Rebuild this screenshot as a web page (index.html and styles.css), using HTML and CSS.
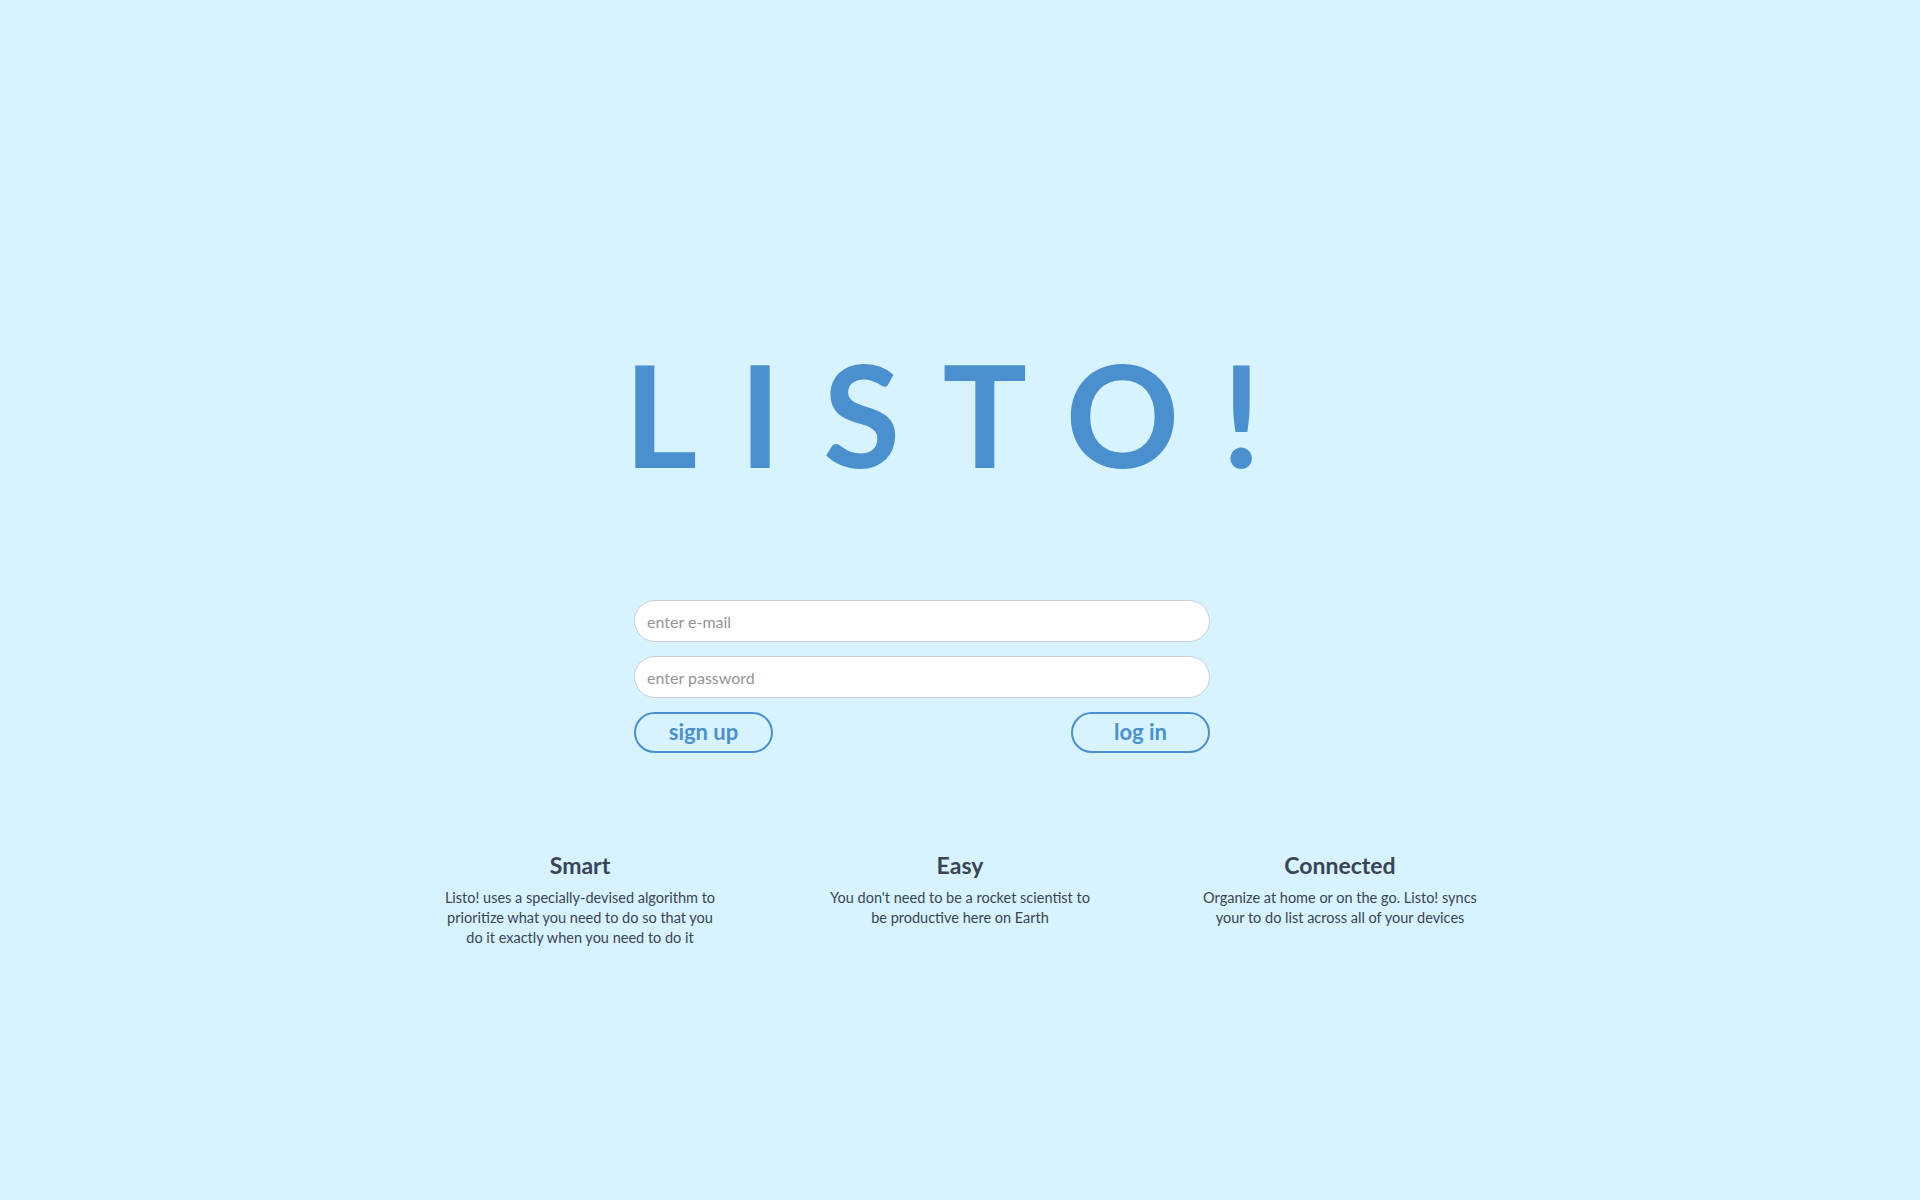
FILE: index.html
```html
<!DOCTYPE html>
<html lang="en">
<head>
<meta charset="utf-8">
<title>Listo!</title>
<link rel="stylesheet" href="styles.css">
</head>
<body>
<main class="page">
  <section class="hero">
    <h1 class="logo">LISTO!</h1>
    <form class="login">
      <input class="field" type="email" placeholder="enter e-mail">
      <input class="field" type="password" placeholder="enter password">
      <div class="actions">
        <button class="btn" type="button">sign up</button>
        <button class="btn" type="button">log in</button>
      </div>
    </form>
  </section>
  <section class="features">
    <div class="feature">
      <h2 class="feature-title">Smart</h2>
      <p class="feature-text">Listo! uses a specially-devised algorithm to<br>prioritize what you need to do so that you<br>do it exactly when you need to do it</p>
    </div>
    <div class="feature">
      <h2 class="feature-title">Easy</h2>
      <p class="feature-text">You don't need to be a rocket scientist to<br>be productive here on Earth</p>
    </div>
    <div class="feature">
      <h2 class="feature-title">Connected</h2>
      <p class="feature-text">Organize at home or on the go. Listo! syncs<br>your to do list across all of your devices</p>
    </div>
  </section>
</main>
</body>
</html>
```
FILE: styles.css
```css
html, body {
  margin: 0;
  padding: 0;
}
body {
  background: #d6f3ff;
  font-family: "Lato", "Liberation Sans", sans-serif;
  color: #3a4456;
  min-height: 1200px;
}
.page {
  display: flex;
  flex-direction: column;
  align-items: center;
  padding-top: 343px;
}
.hero {
  width: 652px;
  display: flex;
  flex-direction: column;
  align-items: flex-start;
}
.logo {
  margin: 0 0 0 -10px;
  font-family: "Lato", sans-serif;
  font-weight: 700;
  font-size: 141px;
  line-height: 1;
  letter-spacing: 42px;
  color: #4a90cf;
}
.login {
  margin-top: 116px;
  width: 576px;
  display: flex;
  flex-direction: column;
  gap: 14px;
}
.field {
  box-sizing: border-box;
  height: 42px;
  width: 100%;
  border: 1px solid #c9cfd3;
  border-radius: 21px;
  background: #fff;
  padding: 0 12px;
  font-family: "Lato", sans-serif;
  font-size: 16px;
  color: #555;
  outline: none;
}
.field::placeholder {
  color: #959595;
}
.actions {
  display: flex;
  justify-content: space-between;
}
.btn {
  box-sizing: border-box;
  width: 139px;
  height: 41px;
  border: 2px solid #4a90cf;
  border-radius: 21px;
  background: transparent;
  color: #4a90cf;
  font-family: "Lato", sans-serif;
  font-weight: 700;
  font-size: 22px;
  padding: 0 0 3px;
}
.features {
  margin-top: 99px;
  width: 1140px;
  display: grid;
  grid-template-columns: repeat(3, 1fr);
}
.feature {
  text-align: center;
}
.feature-title {
  margin: 0;
  font-size: 23px;
  font-weight: 700;
  line-height: 1.2;
  color: #3a4456;
}
.feature-text {
  margin: 8px 0 0;
  font-size: 14.5px;
  line-height: 20px;
  color: #3a4456;
}
```
